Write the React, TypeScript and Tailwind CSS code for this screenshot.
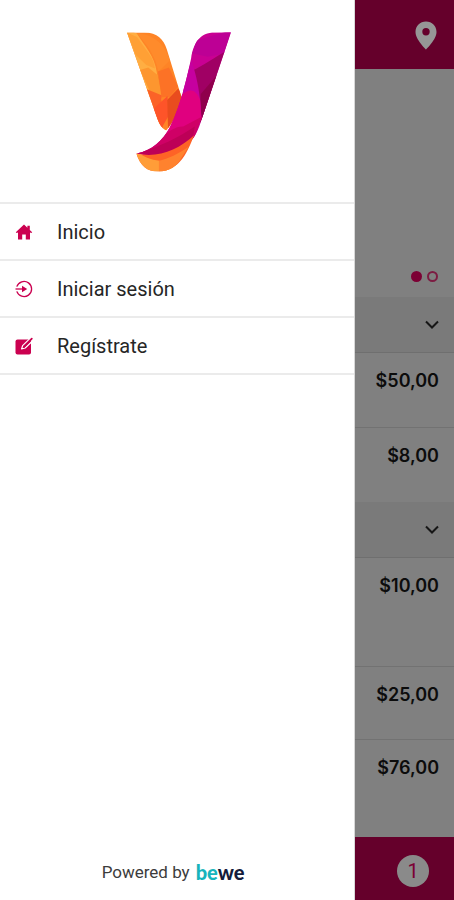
import type { ReactNode } from 'react';

import clsx from 'clsx';

const MENU = [
  { label: 'Inicio', icon: <HomeIcon /> },
  { label: 'Iniciar sesión', icon: <LoginIcon /> },
  { label: 'Regístrate', icon: <RegisterIcon /> },
];

function BrandLogo() {
  return (
    <svg viewBox="36 36 313 420" className="h-[140px] w-[104px]" role="img" aria-label="Logo">
      <defs>
        <clipPath id="left-arm">
          <path d="M36 37H88C128 37 146 58 156 88L201 235C191 278 174 308 154 332C140 324 132 310 126 292Z" />
        </clipPath>
        <clipPath id="right-arm">
          <path d="M349 36L254 318C242 352 222 379 180 395C140 408 100 410 64 401C111 393 144 361 165 322C184 285 206 222 229 114C236 68 256 37 300 37Z" />
        </clipPath>
        <clipPath id="tail">
          <path d="M64 401C130 416 190 390 238 346C220 390 198 454 130 455C96 455 77 440 64 401Z" />
        </clipPath>
      </defs>
      <g clipPath="url(#left-arm)">
        <path fill="#fe8426" d="M20 20H220V350H20Z" />
        <path fill="#ffae42" d="M20 20L66 40C90 80 118 105 126 158L140 240L100 230Z" />
        <path fill="#ffa035" d="M36 37L66 50C98 96 116 110 120 145L94 135L62 104Z" />
        <path fill="#fd962f" d="M75 150L100 142L128 165L142 230L104 212Z" />
        <path fill="#ff8b2b" d="M66 40C110 40 150 70 165 120L130 155C122 105 96 75 66 40Z" />
        <path fill="#fc7226" d="M129 154L162 142L190 200L165 230L140 232Z" />
        <path fill="#fb6228" d="M96 208L140 226L138 300L150 345L110 300Z" />
        <path fill="#fe5429" d="M114 268L158 228L160 290L140 325Z" />
        <path fill="#e94c1e" d="M157 240L190 205L215 240L160 340Z" />
      </g>
      <g clipPath="url(#right-arm)">
        <path fill="#c90093" d="M60 20H360V420H60Z" />
        <path fill="#bd0095" d="M245 60L350 30L330 100L280 110L232 100Z" />
        <path fill="#a00064" d="M230 152C265 138 300 110 340 90L315 180L260 300Z" />
        <path fill="#8f004c" d="M258 222L320 150L290 240L256 310Z" />
        <path fill="#c6009f" d="M230 120C244 165 256 210 260 295L200 210Z" />
        <path fill="#e0007f" d="M200 226C224 202 244 208 256 240L260 300L150 360L155 310Z" />
        <path fill="#cf0066" d="M64 400C125 380 160 318 205 320L262 290L240 350L180 420Z" />
        <path fill="#bd0057" d="M64 400C130 385 195 350 240 320L235 350L180 420Z" />
      </g>
      <g clipPath="url(#tail)">
        <path fill="#fe6326" d="M60 340H250V460H60Z" />
        <path fill="#ff9d38" d="M60 390C100 425 140 425 162 421L190 414L160 465H60Z" />
        <path fill="#ff822e" d="M132 424C165 414 190 403 222 380L170 460L132 460Z" />
      </g>
    </svg>
  );
}

function HomeIcon() {
  return (
    <svg viewBox="0 0 18 18" className="size-[18px]" fill="currentColor" aria-hidden="true">
      <path d="M9 1.5L0.8 9.2L1.6 10.1L3 9.4V16.5H7.2V11.4H10.8V16.5H15V9.4L16.4 10.1L17.2 9.2L14.8 7V2.8H12.4V4.7Z" />
    </svg>
  );
}

function LoginIcon() {
  return (
    <svg viewBox="0 0 18 18" className="size-[18px]" fill="none" stroke="currentColor" strokeWidth="1.3" aria-hidden="true">
      <path d="M1.8 6.6A7.6 7.6 0 1 1 1.8 11.4" />
      <path d="M0.5 9H8" />
      <path d="M7 5.7L12.2 9L7 12.3Z" fill="currentColor" stroke="none" />
    </svg>
  );
}

function RegisterIcon() {
  return (
    <svg viewBox="0 0 18 18" className="size-[18px] overflow-visible" fill="none" aria-hidden="true">
      <rect x="0.5" y="2.5" width="15.5" height="15" rx="2" fill="currentColor" />
      <path stroke="white" strokeWidth="1.2" strokeLinejoin="round" d="M14.8 1.8L7.6 8.6L6.6 12L10.2 11L17.2 4.2" />
      <path stroke="currentColor" strokeWidth="1.8" strokeLinecap="round" d="M9 9.8L16.8 1.6" />
    </svg>
  );
}

function PinIcon() {
  return (
    <svg viewBox="0 0 22 29" className="h-[29px] w-[22px]" fill="currentColor" aria-hidden="true">
      <path
        fillRule="evenodd"
        d="M11 0.5C5 0.5 0.5 5 0.5 11C0.5 18.5 11 28.5 11 28.5S21.5 18.5 21.5 11C21.5 5 17 0.5 11 0.5ZM11 7A3.7 3.7 0 1 1 11 14.4A3.7 3.7 0 1 1 11 7Z"
      />
    </svg>
  );
}

function SectionHeader() {
  return (
    <button
      type="button"
      aria-label="Mostrar sección"
      className="flex h-14 w-full items-center justify-end border-b border-[#6f6f6f] bg-[#7a7a7a] pr-[15px]"
    >
      <svg viewBox="0 0 14 9" className="h-[9px] w-[14px]" fill="none" stroke="#161616" strokeWidth="2" aria-hidden="true">
        <path d="M1 1.5L7 7.5L13 1.5" />
      </svg>
    </button>
  );
}

function PriceRow({ children, className }: { children: ReactNode; className?: string }) {
  return (
    <li
      className={clsx(
        "border-[#727272] pt-4 pr-[15px] text-right font-['Inter',sans-serif] text-lg leading-6 font-semibold text-[#0c0c0c]",
        className,
      )}
    >
      {children}
    </li>
  );
}

export default function App() {
  return (
    <div className="flex min-h-screen bg-[#808080] font-['Roboto',sans-serif]">
      <aside className="flex flex-1 flex-col border-r border-[#d8d8d8] bg-white">
        <div className="flex h-[202px] justify-center pt-8 pl-1">
          <BrandLogo />
        </div>

        <nav className="border-t-2 border-[#ebebeb]">
          <ul>
            {MENU.map(({ label, icon }) => (
              <li key={label} className="border-b-2 border-[#ebebeb]">
                <a href="#" className="flex h-[55px] items-center gap-6 pl-[15px] text-xl text-[#262626]">
                  <span className="text-[#cb0150]">{icon}</span>
                  {label}
                </a>
              </li>
            ))}
          </ul>
        </nav>

        <footer className="mt-auto flex items-center justify-center gap-1.5 pr-2 pb-4 text-[17px] leading-6 text-[#3c3c3c]">
          Powered by
          <span className="font-['Lato',sans-serif] text-xl leading-6 font-black text-[#141c3c]">
            <span className="text-[#17b4bc]">be</span>we
          </span>
        </footer>
      </aside>

      <main className="flex w-[99px] shrink-0 flex-col">
        <header className="flex h-[69px] items-center justify-end bg-[#65002b] pt-0.5 pr-[17px]">
          <button type="button" aria-label="Ubicación" className="text-[#969696]">
            <PinIcon />
          </button>
        </header>

        <div className="flex h-[228px] items-end justify-end gap-[5px] pr-4 pb-[15px]">
          <span className="size-[11px] rounded-full bg-[#7c0034]" />
          <span className="size-[11px] rounded-full border-2 border-[#7c1c42]" />
        </div>

        <SectionHeader />
        <ul>
          <PriceRow className="border-b pb-[34px]">$50,00</PriceRow>
          <PriceRow className="pb-[34px]">$8,00</PriceRow>
        </ul>

        <SectionHeader />
        <ul>
          <PriceRow className="border-b pb-[68px]">$10,00</PriceRow>
          <PriceRow className="border-b pb-8">$25,00</PriceRow>
          <PriceRow className="pb-8">$76,00</PriceRow>
        </ul>

        <footer className="mt-auto flex h-[63px] items-center justify-end bg-[#65002b] pt-1 pr-[25px]">
          <span className="flex size-8 items-center justify-center rounded-full bg-[#8a8a8a] text-xl text-[#7c0034]">
            1
          </span>
        </footer>
      </main>
    </div>
  );
}
